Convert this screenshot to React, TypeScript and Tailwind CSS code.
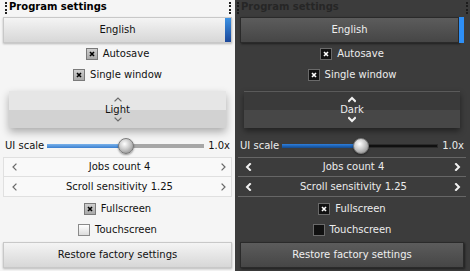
import React from 'react';

type Theme = 'light' | 'dark';

const Chevron: React.FC<{ dir: 'left' | 'right' | 'up' | 'down'; theme: Theme }> = ({ dir, theme }) => {
    const paths: Record<string, string> = {
        left: 'M5 1 L2 4 L5 7',
        right: 'M2 1 L5 4 L2 7',
        up: 'M1 5 L4 2 L7 5',
        down: 'M1 2 L4 5 L7 2',
    };
    const color = theme === 'light' ? '#6a6a6a' : '#f2f2f2';
    return (
        <svg width="8" height="8" viewBox="0 0 8 8" className="block">
            <path d={paths[dir]} fill="none" stroke={color} strokeWidth={theme === 'light' ? 1.2 : 2} strokeLinecap="square" />
        </svg>
    );
};

const CheckBox: React.FC<{ checked: boolean; theme: Theme }> = ({ checked, theme }) => {
    const box =
        theme === 'light'
            ? checked
                ? 'border-[#7a7a7a] bg-gradient-to-b from-[#cfcfcf] to-[#a9a9a9]'
                : 'border-[#8a8a8a] bg-gradient-to-b from-[#ffffff] to-[#dcdcdc]'
            : 'border-[#6a6a6a] bg-[#111111]';
    return (
        <div className={`w-[12px] h-[12px] border flex items-center justify-center ${box}`}>
            {checked && (
                <svg width="10" height="10" viewBox="0 0 10 10" className="block">
                    <path d="M3 3 L7 7 M7 3 L3 7" stroke={theme === 'light' ? '#000' : '#fff'} strokeWidth="1.6" />
                </svg>
            )}
        </div>
    );
};

const CheckRow: React.FC<{ label: string; checked: boolean; theme: Theme }> = ({ label, checked, theme }) => (
    <div className="h-[21px] flex items-center justify-center gap-[5px]">
        <CheckBox checked={checked} theme={theme} />
        <span className={theme === 'light' ? 'text-[#111]' : 'text-[#ececec]'}>{label}</span>
    </div>
);

const Button: React.FC<{ label: string; theme: Theme; accent?: boolean }> = ({ label, theme, accent }) => {
    if (theme === 'light') {
        return (
            <div className="relative h-[26px] flex items-center justify-center bg-gradient-to-b from-[#f4f4f4] to-[#d7d7d7] border border-[#c8c8c8] text-[#111] shadow-[0_1px_2px_rgba(0,0,0,0.25)]">
                <span>{label}</span>
                {accent && <div className="absolute right-0 top-0 bottom-0 w-[6px] bg-gradient-to-b from-[#3c92e4] to-[#1b479a]" />}
            </div>
        );
    }
    return (
        <div className="h-[26px] flex">
            <div className="flex-1 flex items-center justify-center bg-gradient-to-b from-[#5c5c5c] to-[#464646] border border-[#2a2a2a] text-[#efefef] shadow-[1px_1px_2px_rgba(0,0,0,0.5)]">
                <span>{label}</span>
            </div>
            {accent && <div className="w-[5px] bg-[#2e8ff6]" />}
        </div>
    );
};

const Spinner: React.FC<{ label: string; theme: Theme }> = ({ label, theme }) => {
    const light = theme === 'light';
    return (
        <div
            className={`relative h-[37px] flex flex-col ${
                light
                    ? 'mx-[6px] shadow-[0_4px_8px_rgba(0,0,0,0.3)]'
                    : 'ml-[4px] mr-[4px] border-t border-[#5a5a5a] shadow-[0_3px_6px_rgba(0,0,0,0.45)]'
            }`}
        >
            <div className={`flex-1 ${light ? 'bg-[#e6e6e6]' : 'bg-[#3a3a3a]'}`} />
            <div className={`flex-1 ${light ? 'bg-[#d2d2d2]' : 'bg-[#474747]'}`} />
            <div className="absolute inset-0 flex flex-col items-center justify-center">
                <Chevron dir="up" theme={theme} />
                <span className={`leading-[12px] ${light ? 'text-[#111]' : 'text-[#ececec]'}`}>{label}</span>
                <Chevron dir="down" theme={theme} />
            </div>
        </div>
    );
};

const Slider: React.FC<{ theme: Theme }> = ({ theme }) => {
    const light = theme === 'light';
    return (
        <div className={`h-[19px] flex items-center ${light ? 'px-[2px]' : ''}`}>
            <span className={`mr-[3px] ${light ? 'text-[#111]' : 'text-[#ececec]'}`}>UI scale</span>
            <div className="relative flex-1 h-[4px] flex">
                <div className={`w-[80px] h-full ${light ? 'bg-gradient-to-b from-[#7ab2ea] to-[#3a7fd0]' : 'bg-gradient-to-b from-[#2f7fdc] to-[#114a90]'}`} />
                <div className={`flex-1 h-full ${light ? 'bg-[#a7a7a7]' : 'bg-[#101010] border border-[#2a2a2a]'}`} />
                <div className="absolute left-[71px] top-[-6px] w-[16px] h-[16px] rounded-full border border-[#7a7a7a] bg-[radial-gradient(circle_at_40%_35%,#ffffff,#c9c9c9_45%,#7c7c7c)] shadow-[0_1px_2px_rgba(0,0,0,0.4)]" />
            </div>
            <span className={`ml-[4px] ${light ? 'text-[#111]' : 'text-[#ececec]'}`}>1.0x</span>
        </div>
    );
};

const Stepper: React.FC<{ label: string; theme: Theme; first?: boolean }> = ({ label, theme, first }) => {
    const light = theme === 'light';
    const cls = light
        ? `bg-[#f9f9f9] border-x border-b border-[#e0e0e0] pl-[7px] pr-[3px] ${first ? 'border-t' : ''}`
        : `border-b border-[#666] -mx-[2px] pl-[7px] pr-[4px] ${first ? 'border-t' : ''}`;
    return (
        <div className={`h-[20px] flex items-center justify-between ${cls}`}>
            <Chevron dir="left" theme={theme} />
            <span className={light ? 'text-[#111]' : 'text-[#ececec]'}>{label}</span>
            <Chevron dir="right" theme={theme} />
        </div>
    );
};

const Panel: React.FC<{ theme: Theme; themeLabel: string }> = ({ theme, themeLabel }) => {
    const light = theme === 'light';
    return (
        <div
            className={`relative w-[235px] h-[271px] flex flex-col ${
                light ? 'bg-[#f5f5f5] px-[3px]' : 'bg-[#3c3c3c] pl-[5px] pr-[6px]'
            }`}
        >
            <div className={`h-[16px] flex items-start ${light ? 'pl-[2px]' : '-ml-[3px] -mr-[5px]'}`}>
                <div className={`mt-[2px] h-[12px] border-l-2 border-dotted ${light ? 'border-[#222]' : 'border-[#1c1c1c]'}`} />
                <span className={`font-bold leading-[14px] ml-[2px] ${light ? 'text-[#000]' : 'text-[#262626]'}`}>Program settings</span>
                <div className={`ml-auto mr-[1px] mt-[2px] h-[12px] border-l-2 border-dotted ${light ? 'border-[#222]' : 'border-[#1c1c1c]'}`} />
            </div>
            <div className="mt-[1px]">
                <Button label="English" theme={theme} accent />
            </div>
            <CheckRow label="Autosave" checked theme={theme} />
            <CheckRow label="Single window" checked theme={theme} />
            <div className="mt-[6px]">
                <Spinner label={themeLabel} theme={theme} />
            </div>
            <div className="mt-[8px]">
                <Slider theme={theme} />
            </div>
            <div className="mt-[2px]">
                <Stepper label="Jobs count 4" theme={theme} first />
                <Stepper label="Scroll sensitivity 1.25" theme={theme} />
            </div>
            <div className="mt-[1px]">
                <CheckRow label="Fullscreen" checked theme={theme} />
                <CheckRow label="Touchscreen" checked={false} theme={theme} />
            </div>
            <div className="mt-[2px]">
                <Button label="Restore factory settings" theme={theme} />
            </div>
        </div>
    );
};

const App: React.FC = () => {
    return (
        <div className="w-[470px] h-[271px] flex overflow-hidden text-[10px] leading-[12px] font-['DejaVu_Sans',sans-serif]">
            <Panel theme="light" themeLabel="Light" />
            <Panel theme="dark" themeLabel="Dark" />
        </div>
    );
};

export default App;
